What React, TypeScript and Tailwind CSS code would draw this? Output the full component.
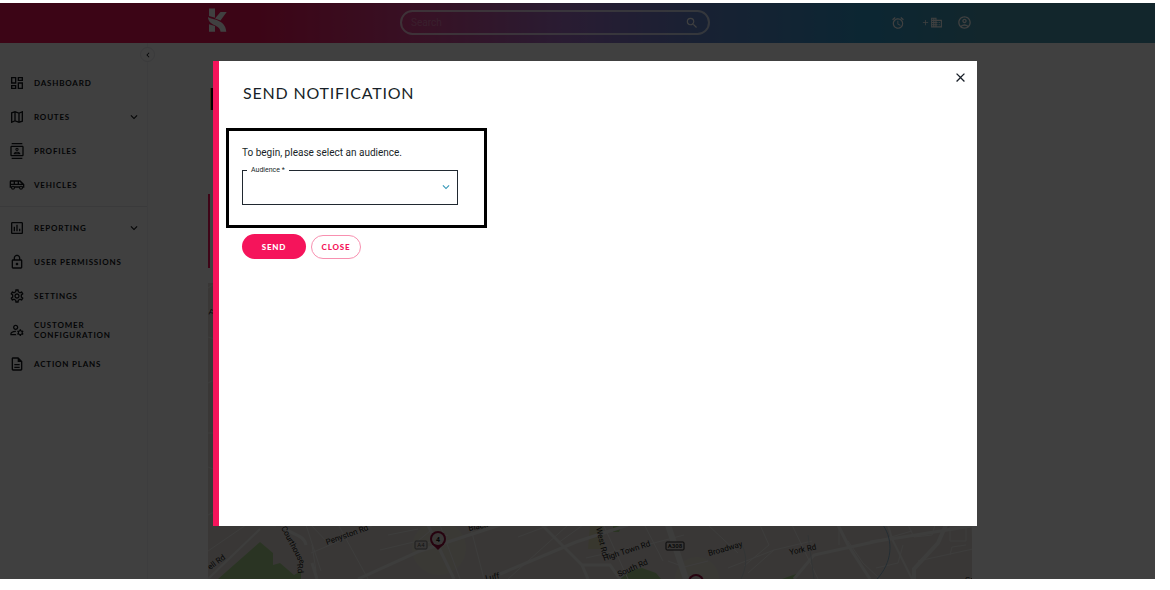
import React from "react";
import type { IconType } from "react-icons";
import {
  MdAdd,
  MdAlarm,
  MdBusiness,
  MdChevronLeft,
  MdClose,
  MdExpandMore,
  MdOutlineAccountCircle,
  MdOutlineAirportShuttle,
  MdOutlineAssessment,
  MdOutlineContacts,
  MdOutlineDashboard,
  MdOutlineDescription,
  MdOutlineLock,
  MdOutlineManageAccounts,
  MdOutlineMap,
  MdOutlineSettings,
  MdSearch,
} from "react-icons/md";

interface NavItem {
  label: string;
  icon: IconType;
  expandable?: boolean;
}

const PRIMARY_NAV: NavItem[] = [
  { label: "Dashboard", icon: MdOutlineDashboard },
  { label: "Routes", icon: MdOutlineMap, expandable: true },
  { label: "Profiles", icon: MdOutlineContacts },
  { label: "Vehicles", icon: MdOutlineAirportShuttle },
];

const SECONDARY_NAV: NavItem[] = [
  { label: "Reporting", icon: MdOutlineAssessment, expandable: true },
  { label: "User Permissions", icon: MdOutlineLock },
  { label: "Settings", icon: MdOutlineSettings },
  { label: "Customer Configuration", icon: MdOutlineManageAccounts },
  { label: "Action Plans", icon: MdOutlineDescription },
];

const Logo: React.FC = () => (
  <svg viewBox="0 0 19 24" className="w-[19px] h-6 self-start mt-[5px] fill-white" aria-label="Home">
    <path d="M1 0.5H7V9.8L1 8Z" />
    <path d="M12.5 4H18.7L12.5 12.5L7 10.5Z" />
    <path d="M0 9C4 12 17.5 11 18.3 23.7H12.5C12 16 0.5 18.5 0 9Z" />
    <path d="M1 16.2L7 18V23.7H1Z" />
  </svg>
);

const Header: React.FC = () => (
  <header className="h-10 pl-[208px] pb-px bg-[linear-gradient(90deg,#f01458_0%,#f01458_22%,#dc4490_36%,#a470c8_49%,#6084cc_61%,#3098c8_75%,#4898b0_85%,#4898b0_100%)]">
    <div className="h-full max-w-[764px] flex items-center">
      <Logo />
      <div className="ml-[173px] mr-auto w-[310px] h-[25px] flex items-center rounded-full border-2 border-white/70 pl-[9px] pr-[9px]">
        <input
          type="search"
          aria-label="Search"
          placeholder="Search"
          className="flex-1 min-w-0 bg-transparent text-[10px] text-white placeholder:text-white/30 outline-none"
        />
        <button type="button" aria-label="Run search" className="text-white">
          <MdSearch size={14} />
        </button>
      </div>
      <div className="flex items-center text-white">
        <button type="button" aria-label="Reminders" className="mr-4">
          <MdAlarm size={14} />
        </button>
        <button type="button" aria-label="Add organisation" className="flex items-center mr-[14px]">
          <MdAdd size={9} />
          <MdBusiness size={13} />
        </button>
        <button type="button" aria-label="Account">
          <MdOutlineAccountCircle size={15} />
        </button>
      </div>
    </div>
  </header>
);

const NavList: React.FC<{ items: NavItem[] }> = ({ items }) => (
  <ul>
    {items.map(({ label, icon: Icon, expandable }) => (
      <li key={label}>
        <a href="#" className="h-[34px] pl-[9px] pr-[6px] flex items-center gap-[9px]">
          <Icon size={16} className="shrink-0" />
          <span className="flex-1 text-[8px] leading-[10px] font-bold uppercase tracking-widest">{label}</span>
          {expandable && <MdExpandMore size={14} className="shrink-0" />}
        </a>
      </li>
    ))}
  </ul>
);

const Sidebar: React.FC = () => (
  <aside className="relative w-[148px] shrink-0 border-r border-gray-100 pt-[23px] font-[Lato,sans-serif] text-[#101418]">
    <button
      type="button"
      aria-label="Collapse menu"
      className="absolute top-1 -right-2 size-[15px] rounded-full border border-gray-200 bg-white flex items-center justify-center"
    >
      <MdChevronLeft size={10} />
    </button>
    <nav>
      <NavList items={PRIMARY_NAV} />
      <hr className="my-1 border-gray-200" />
      <NavList items={SECONDARY_NAV} />
    </nav>
  </aside>
);

const MINOR_ROADS = [
  "M0 5L8 0M0 28H12M0 54L20 60M0 100L10 95M0 150H18M0 184L16 190M0 232L28 218",
  "M0 268L38 242L68 243M38 242L47 232M98 242L113 288M103 242L122 262L170 240L196 242M122 262L103 270",
  "M131 243L160 296M180 252L210 246M172 267L210 258L222 248M214 262L240 252M104 262L108 288",
  "M232 242L252 296M262 242L276 296M310 254L342 242M300 296L360 242M375 242L350 260",
  "M396 243L420 296M437 243L455 278M378 275L400 270L446 260L476 252M460 278L476 284L500 278",
  "M500 242L530 270M520 285L566 267L604 258M552 242L561 262L536 283M566 267L540 290M584 242L610 296",
  "M640 258L655 280L672 296M631 242V262M662 258L676 256L704 248M700 242L706 254L724 252L727 242",
  "M668 285L690 280L695 262M710 278L765 266L764 243M742 244H758V258H742V244M742 272L744 264L758 262",
];

const MAJOR_ROADS = [
  "M150 296L212 268L292 242",
  "M292 291L368 259L420 242",
  "M220 242L246 296",
  "M334 242L374 282L380 296M374 282H402L412 296",
  "M586 296L606 272L670 258L764 243",
  "M630 242L640 262L662 296",
];

// Street map behind the dialog; grows with the column and keeps its scale.
const StreetMap: React.FC = () => (
  <svg
    viewBox="0 0 764 296"
    preserveAspectRatio="xMinYMin slice"
    className="w-full h-full bg-[#e2dcd6] font-[Roboto,sans-serif]"
    aria-label="Map of vehicles"
  >
    <g fill="#a8d08c">
      <path d="M10 296L52 259L65 270V282L72 280L86 292L93 288V296Z" />
      <path d="M412 296L424 287L434 285L448 290L453 296Z" />
      <path d="M405 242H414L411 249H405ZM574 296L588 291V296Z" />
    </g>
    <path d="M382 242H395V266H380Z" fill="#dedab8" />
    <g fill="#e6e2d4">
      <circle cx="231" cy="265" r="27" />
      <circle cx="489" cy="296" r="22" />
    </g>
    <g fill="none" stroke="#f4f2f0">
      {MINOR_ROADS.map((d) => (
        <path key={d} d={d} strokeWidth="1" />
      ))}
      {MAJOR_ROADS.map((d) => (
        <path key={d} d={d} strokeWidth="3" />
      ))}
      <path d="M460 242L478 296" strokeWidth="6" />
      <path d="M98 262C96 250 80 252 74 242M104 280L109 296" strokeWidth="3" />
      <path d="M0 296L52 246M680 242L684 256L704 296" strokeWidth="2" />
      <path d="M738 242L730 260L706 286V296" strokeWidth="4" />
    </g>
    <path d="M675 242C686 258 684 280 669 296" fill="none" stroke="#90b4cc" strokeWidth="1" />
    <path d="M600 252L606 296M533 296C538 285 540 275 534 262" fill="none" stroke="#c8d0d4" strokeWidth="1" />
    <g fill="#202020" fontSize="8">
      <text transform="translate(0 31) rotate(25)">Poplar</text>
      <text transform="translate(2 287) rotate(-36)">ell Rd</text>
      <text transform="translate(73 245) rotate(62)">Courthouse</text>
      <text transform="translate(89 281) rotate(84)">Rd</text>
      <text transform="translate(119 262) rotate(-20)">Penyston Rd</text>
      <text transform="translate(261 248) rotate(-12)">Black</text>
      <text transform="translate(278 298) rotate(-12)">Luff</text>
      <text transform="translate(388 245) rotate(77)">West Rd</text>
      <text transform="translate(396 278) rotate(-18)">High Town Rd</text>
      <text transform="translate(411 294) rotate(-24)">South Rd</text>
      <text transform="translate(501 273) rotate(-16)">Broadway</text>
      <text transform="translate(582 272) rotate(-12)">York Rd</text>
      <text x="757" y="299">Gr</text>
    </g>
    <g fontSize="6" textAnchor="middle">
      <rect x="207" y="258" width="12" height="8" rx="1" fill="#e2dcd6" stroke="#777777" />
      <text x="213" y="264" fill="#555555">A4</text>
      <rect x="458" y="259" width="18" height="8" rx="1" fill="#e2dcd6" stroke="#202020" />
      <text x="467" y="265" fontWeight="bold" fill="#303030">A308</text>
    </g>
    <g fill="#980c3c">
      <path d="M224 261L230 267L236 261Z" />
      <circle cx="230" cy="256" r="8" />
      <circle cx="230" cy="256" r="6" fill="#e2dcd6" />
      <text x="230" y="259" fontSize="7" fontWeight="bold" textAnchor="middle" fill="#181818">
        4
      </text>
      <circle cx="488" cy="299" r="8" />
      <circle cx="488" cy="299" r="6" fill="#e2dcd6" />
    </g>
  </svg>
);

const SendNotificationDialog: React.FC = () => (
  <section
    role="dialog"
    aria-labelledby="dialog-title"
    className="relative w-[764px] border-l-[6px] border-[#f5145b] bg-white pt-6 pl-6 pr-6 text-[#181f28]"
  >
    <button type="button" aria-label="Close dialog" className="absolute top-[9px] right-[9px]">
      <MdClose size={15} />
    </button>
    <h2 id="dialog-title" className="font-[Lato,sans-serif] text-base leading-4 uppercase tracking-wider">
      Send Notification
    </h2>
    <div className="-ml-[17px] mt-[27px] w-[261px] h-[100px] border-[3px] border-black pl-[13px] pt-4">
      <p className="text-[10px] leading-3">To begin, please select an audience.</p>
      <div className="relative mt-[11px] w-[216px]">
        <select
          id="audience"
          required
          defaultValue=""
          className="block w-full h-[35px] appearance-none border border-[#202830] bg-white px-2 text-[10px]"
        >
          <option value="" />
        </select>
        <label htmlFor="audience" className="absolute -top-1 left-[5px] bg-white px-1 text-[7px] leading-2">
          Audience *
        </label>
        <MdExpandMore size={14} className="absolute right-[5px] top-[10px] pointer-events-none text-[#3898b8]" />
      </div>
    </div>
    <div className="-ml-px mt-[6px] flex items-center gap-[5px] font-[Lato,sans-serif] text-[8px] font-black tracking-widest">
      <button type="button" className="h-[25px] w-16 rounded-full bg-[#f5145b] text-white">
        SEND
      </button>
      <button type="button" className="h-6 w-[50px] rounded-full border border-[#f890b0] text-[#f5145b]">
        CLOSE
      </button>
    </div>
  </section>
);

const App: React.FC = () => {
  return (
    <div className="h-screen bg-white pt-[3px] pr-[15px] pb-[11px] font-[Roboto,sans-serif]">
      <div className="relative h-full flex flex-col overflow-hidden">
        <Header />
        <div className="flex-1 min-h-0 flex">
          <Sidebar />
          <main className="flex-1 min-w-0 pl-[60px] flex flex-col">
            <div className="max-w-[764px] flex-1 min-h-0 flex flex-col">
              <h1 className="pt-10 pl-px h-[151px] text-[32px] leading-8 font-black text-black">M</h1>
              <div className="h-[74px] mb-[15px] border-l-2 border-[#f5145b]" />
              <div className="flex-1 min-h-0">
                <StreetMap />
              </div>
            </div>
          </main>
        </div>

        <div className="absolute inset-0 flex justify-center bg-black/75 pt-[58px] pb-[53px] pl-[35px]">
          <SendNotificationDialog />
        </div>
      </div>
    </div>
  );
};

export default App;
